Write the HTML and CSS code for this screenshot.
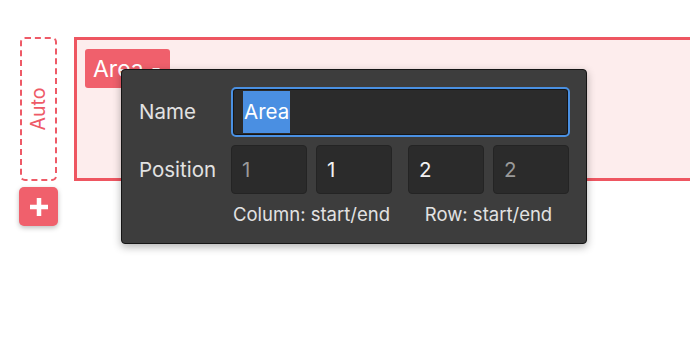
FILE: index.html
```html
<!DOCTYPE html>
<html>
<head>
    <title>Grid area editor</title>
    <link rel="stylesheet" href="styles.css">
</head>
    <body>
        <div class="grid-editor">
            <!-- left rail with the auto track and add button -->
            <div class="track-rail">
                <div class="auto-track"><span>Auto</span></div>
                <button class="add-button" aria-label="Add">
                    <svg width="18" height="18" viewBox="0 0 18 18"><path d="M9 0v18M0 9h18" stroke="#fff" stroke-width="4.5"/></svg>
                </button>
            </div>
            <!-- the grid area with its popover -->
            <div class="grid-area">
                <div class="area-badge">Area <span class="caret"></span></div>
                <div class="area-popover">
                    <div class="popover-row">
                        <label for="areaName">Name</label>
                        <div class="name-field"><span class="selected">Area</span></div>
                    </div>
                    <div class="popover-row">
                        <label>Position</label>
                        <div class="position-groups">
                            <div class="position-group">
                                <div class="pos-inputs">
                                    <div class="pos-input muted">1</div>
                                    <div class="pos-input">1</div>
                                </div>
                                <div class="pos-caption">Column: start/end</div>
                            </div>
                            <div class="position-group">
                                <div class="pos-inputs">
                                    <div class="pos-input">2</div>
                                    <div class="pos-input muted">2</div>
                                </div>
                                <div class="pos-caption">Row: start/end</div>
                            </div>
                        </div>
                    </div>
                </div>
            </div>
        </div>
    </body>
</html>
```

FILE: styles.css
```css
body {
    margin: 0;
    background: #fff;
    font-family: Inter, "Noto Sans", sans-serif;
}

/* main row, clipped at the window edge */
.grid-editor {
    display: flex;
    align-items: flex-start;
    box-sizing: border-box;
    height: 100vh;
    padding: 37px 0 0 19px;
    gap: 16px;
    overflow: hidden;
}

/* left column */
.track-rail {
    display: flex;
    flex-direction: column;
    align-items: center;
    gap: 6px;
}

.auto-track {
    width: 33px;
    height: 140px;
    border: 2px dashed #ee5a67;
    border-radius: 5px;
    display: flex;
    align-items: center;
    justify-content: center;
}

.auto-track span {
    transform: rotate(-90deg);
    color: #ee5a67;
    font-size: 19.5px;
    white-space: nowrap;
}

.add-button {
    width: 39px;
    height: 39px;
    border: none;
    border-radius: 5px;
    background: #f0606c;
    box-shadow: 0 2px 5px rgba(0, 0, 0, 0.25);
    display: flex;
    align-items: center;
    justify-content: center;
    padding: 0;
}

/* pink grid area */
.grid-area {
    position: relative;
    flex-shrink: 0;
    width: 640px;
    height: 120px;
    border: 3px solid #ee5661;
    background: #fdeded;
    padding: 9px 8px;
}

.area-badge {
    display: inline-flex;
    align-items: center;
    gap: 8px;
    height: 39px;
    padding: 0 10px 0 8px;
    background: #f0606c;
    border-radius: 3px;
    color: #fff;
    font-size: 23px;
}

.caret {
    width: 0;
    height: 0;
    border-left: 4px solid transparent;
    border-right: 4px solid transparent;
    border-top: 4px solid #fff;
    margin-top: 3px;
}

/* dark popover */
.area-popover {
    position: absolute;
    left: 44px;
    top: 29px;
    width: 431px;
    padding: 17px 16px 18px 17px;
    background: #3d3d3d;
    border: 1px solid #151515;
    border-radius: 4px;
    box-shadow: 0 3px 8px rgba(0, 0, 0, 0.3);
    display: flex;
    flex-direction: column;
    gap: 8px;
}

.popover-row {
    display: flex;
    align-items: flex-start;
}

.popover-row label {
    width: 92px;
    flex-shrink: 0;
    color: #e2e2e2;
    font-size: 20.5px;
    line-height: 50px;
}

.name-field {
    box-sizing: border-box;
    width: 341px;
    height: 50px;
    border: 2px solid #4a90e2;
    border-radius: 5px;
    background: #2b2b2b;
    box-shadow: inset 0 0 0 1px #151515;
    display: flex;
    align-items: center;
    padding-left: 10px;
}

.selected {
    background: #4a8fe2;
    color: #fff;
    font-size: 20.5px;
    line-height: 42px;
    padding: 0 1px;
}

.position-groups {
    display: flex;
    gap: 16px;
}

.pos-inputs {
    display: flex;
    gap: 9px;
}

.pos-input {
    box-sizing: border-box;
    width: 76px;
    height: 49px;
    padding-left: 10px;
    background: #2b2b2b;
    border: 1px solid #242424;
    border-radius: 4px;
    color: #f2f2f2;
    font-size: 20.5px;
    line-height: 47px;
}

.pos-input.muted {
    color: #9a9a9a;
}

.pos-caption {
    text-align: center;
    color: #e2e2e2;
    font-size: 18.5px;
    margin-top: 9px;
}
```
